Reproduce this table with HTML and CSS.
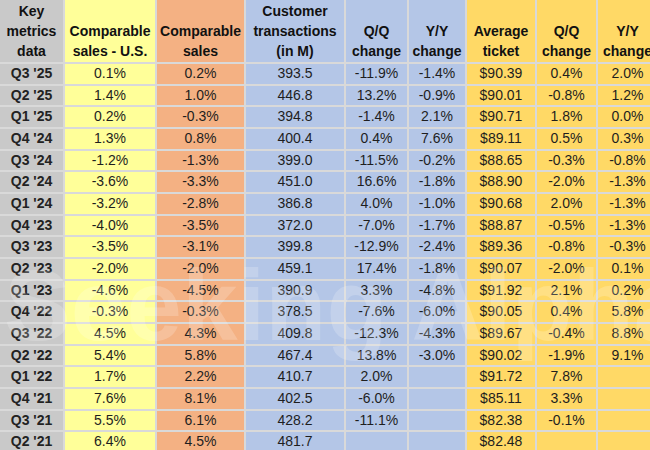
FILE: index.html
```html
<!DOCTYPE html>
<html>
<head>
<meta charset="utf-8">
<link rel="stylesheet" href="styles.css">
</head>
<body>
<div class="sheet">
  <div class="grid">
    <div class="h c-key">Key<br>metrics<br>data</div>
    <div class="h c-us">Comparable<br>sales - U.S.</div>
    <div class="h c-cs">Comparable<br>sales</div>
    <div class="h c-bl">Customer<br>transactions<br>(in M)</div>
    <div class="h c-bl">Q/Q<br>change</div>
    <div class="h c-bl">Y/Y<br>change</div>
    <div class="h c-gd">Average<br>ticket</div>
    <div class="h c-gd">Q/Q<br>change</div>
    <div class="h c-gd">Y/Y<br>change</div>

    <div class="k c-key">Q3 '25</div><div class="d c-us">0.1%</div><div class="d c-cs">0.2%</div><div class="d c-bl">393.5</div><div class="d c-bl">-11.9%</div><div class="d c-bl">-1.4%</div><div class="d c-gd">$90.39</div><div class="d c-gd">0.4%</div><div class="d c-gd">2.0%</div>
    <div class="k c-key">Q2 '25</div><div class="d c-us">1.4%</div><div class="d c-cs">1.0%</div><div class="d c-bl">446.8</div><div class="d c-bl">13.2%</div><div class="d c-bl">-0.9%</div><div class="d c-gd">$90.01</div><div class="d c-gd">-0.8%</div><div class="d c-gd">1.2%</div>
    <div class="k c-key">Q1 '25</div><div class="d c-us">0.2%</div><div class="d c-cs">-0.3%</div><div class="d c-bl">394.8</div><div class="d c-bl">-1.4%</div><div class="d c-bl">2.1%</div><div class="d c-gd">$90.71</div><div class="d c-gd">1.8%</div><div class="d c-gd">0.0%</div>
    <div class="k c-key">Q4 '24</div><div class="d c-us">1.3%</div><div class="d c-cs">0.8%</div><div class="d c-bl">400.4</div><div class="d c-bl">0.4%</div><div class="d c-bl">7.6%</div><div class="d c-gd">$89.11</div><div class="d c-gd">0.5%</div><div class="d c-gd">0.3%</div>
    <div class="k c-key">Q3 '24</div><div class="d c-us">-1.2%</div><div class="d c-cs">-1.3%</div><div class="d c-bl">399.0</div><div class="d c-bl">-11.5%</div><div class="d c-bl">-0.2%</div><div class="d c-gd">$88.65</div><div class="d c-gd">-0.3%</div><div class="d c-gd">-0.8%</div>
    <div class="k c-key">Q2 '24</div><div class="d c-us">-3.6%</div><div class="d c-cs">-3.3%</div><div class="d c-bl">451.0</div><div class="d c-bl">16.6%</div><div class="d c-bl">-1.8%</div><div class="d c-gd">$88.90</div><div class="d c-gd">-2.0%</div><div class="d c-gd">-1.3%</div>
    <div class="k c-key">Q1 '24</div><div class="d c-us">-3.2%</div><div class="d c-cs">-2.8%</div><div class="d c-bl">386.8</div><div class="d c-bl">4.0%</div><div class="d c-bl">-1.0%</div><div class="d c-gd">$90.68</div><div class="d c-gd">2.0%</div><div class="d c-gd">-1.3%</div>
    <div class="k c-key">Q4 '23</div><div class="d c-us">-4.0%</div><div class="d c-cs">-3.5%</div><div class="d c-bl">372.0</div><div class="d c-bl">-7.0%</div><div class="d c-bl">-1.7%</div><div class="d c-gd">$88.87</div><div class="d c-gd">-0.5%</div><div class="d c-gd">-1.3%</div>
    <div class="k c-key">Q3 '23</div><div class="d c-us">-3.5%</div><div class="d c-cs">-3.1%</div><div class="d c-bl">399.8</div><div class="d c-bl">-12.9%</div><div class="d c-bl">-2.4%</div><div class="d c-gd">$89.36</div><div class="d c-gd">-0.8%</div><div class="d c-gd">-0.3%</div>
    <div class="k c-key">Q2 '23</div><div class="d c-us">-2.0%</div><div class="d c-cs">-2.0%</div><div class="d c-bl">459.1</div><div class="d c-bl">17.4%</div><div class="d c-bl">-1.8%</div><div class="d c-gd">$90.07</div><div class="d c-gd">-2.0%</div><div class="d c-gd">0.1%</div>
    <div class="k c-key">Q1 '23</div><div class="d c-us">-4.6%</div><div class="d c-cs">-4.5%</div><div class="d c-bl">390.9</div><div class="d c-bl">3.3%</div><div class="d c-bl">-4.8%</div><div class="d c-gd">$91.92</div><div class="d c-gd">2.1%</div><div class="d c-gd">0.2%</div>
    <div class="k c-key">Q4 '22</div><div class="d c-us">-0.3%</div><div class="d c-cs">-0.3%</div><div class="d c-bl">378.5</div><div class="d c-bl">-7.6%</div><div class="d c-bl">-6.0%</div><div class="d c-gd">$90.05</div><div class="d c-gd">0.4%</div><div class="d c-gd">5.8%</div>
    <div class="k c-key">Q3 '22</div><div class="d c-us">4.5%</div><div class="d c-cs">4.3%</div><div class="d c-bl">409.8</div><div class="d c-bl">-12.3%</div><div class="d c-bl">-4.3%</div><div class="d c-gd">$89.67</div><div class="d c-gd">-0.4%</div><div class="d c-gd">8.8%</div>
    <div class="k c-key">Q2 '22</div><div class="d c-us">5.4%</div><div class="d c-cs">5.8%</div><div class="d c-bl">467.4</div><div class="d c-bl">13.8%</div><div class="d c-bl">-3.0%</div><div class="d c-gd">$90.02</div><div class="d c-gd">-1.9%</div><div class="d c-gd">9.1%</div>
    <div class="k c-key">Q1 '22</div><div class="d c-us">1.7%</div><div class="d c-cs">2.2%</div><div class="d c-bl">410.7</div><div class="d c-bl">2.0%</div><div class="d c-bl"></div><div class="d c-gd">$91.72</div><div class="d c-gd">7.8%</div><div class="d c-gd"></div>
    <div class="k c-key">Q4 '21</div><div class="d c-us">7.6%</div><div class="d c-cs">8.1%</div><div class="d c-bl">402.5</div><div class="d c-bl">-6.0%</div><div class="d c-bl"></div><div class="d c-gd">$85.11</div><div class="d c-gd">3.3%</div><div class="d c-gd"></div>
    <div class="k c-key">Q3 '21</div><div class="d c-us">5.5%</div><div class="d c-cs">6.1%</div><div class="d c-bl">428.2</div><div class="d c-bl">-11.1%</div><div class="d c-bl"></div><div class="d c-gd">$82.38</div><div class="d c-gd">-0.1%</div><div class="d c-gd"></div>
    <div class="k c-key">Q2 '21</div><div class="d c-us">6.4%</div><div class="d c-cs">4.5%</div><div class="d c-bl">481.7</div><div class="d c-bl"></div><div class="d c-bl"></div><div class="d c-gd">$82.48</div><div class="d c-gd"></div><div class="d c-gd"></div>
  </div>
  <div class="watermark" aria-hidden="true">Seeking Alpha</div>
</div>
</body>
</html>
```

FILE: styles.css
```css
html, body {
  margin: 0;
  padding: 0;
  background: #ffffff;
  overflow: hidden;
}

.sheet {
  position: relative;
  width: 660px;
  height: 450px;
  overflow: hidden;
  font-family: "Liberation Sans", Arial, sans-serif;
}

.grid {
  display: grid;
  grid-template-columns: 63px 90px 87px 98px 61px 56px 68px 59px 59px;
  grid-template-rows: 62px;
  grid-auto-rows: 19.67px;
  gap: 2px;
  background: #d9d9d9;
  width: max-content;
}

.h {
  font-size: 14px;
  font-weight: bold;
  line-height: 20px;
  color: #111;
  text-align: center;
  display: flex;
  flex-direction: column;
  justify-content: flex-end;
  padding-bottom: 1px;
}

.c-key.h {
  justify-content: center;
  padding-bottom: 0;
}

.k {
  font-size: 14px;
  font-weight: bold;
  color: #222;
  text-align: center;
  line-height: 19.67px;
}

.d {
  font-size: 14px;
  color: #1e1e1e;
  text-align: center;
  line-height: 19.67px;
}

.c-key { background: #c9c9c9; }
.c-us  { background: #ffff99; }
.c-cs  { background: #f4b183; }
.c-bl  { background: #b4c6e7; }
.c-gd  { background: #ffd966; }

.watermark {
  position: absolute;
  left: 4px;
  top: 255px;
  font-size: 100px;
  font-weight: bold;
  line-height: 100px;
  white-space: nowrap;
  color: rgba(255, 255, 255, 0.2);
  pointer-events: none;
}
```
